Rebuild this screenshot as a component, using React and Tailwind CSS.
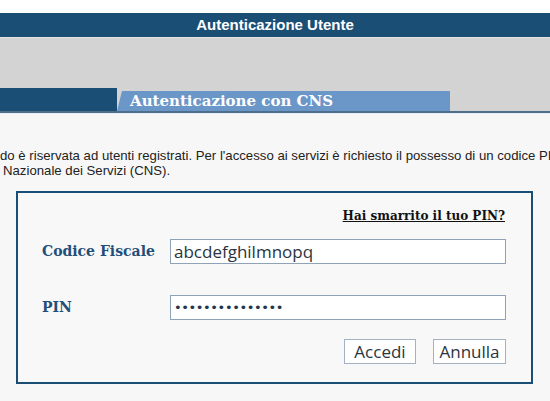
const serif = "font-['DejaVu_Serif',serif]";

export default function App() {
  return (
    <div className="w-[550px] h-[401px] overflow-hidden bg-[#f7f7f7] font-['Liberation_Sans',Arial,sans-serif]">
      <div className="h-[13px] bg-white" />
      <div className="h-[24px] bg-[#1a4e75] flex items-center justify-center text-white font-bold text-[15px]">
        Autenticazione Utente
      </div>
      <div className="h-[74px] bg-[#d3d3d3] border-t border-[#e4e4e4] flex items-end">
        <div className="w-[117px] h-[23px] bg-[#1a4e75]" />
        <div className="w-[333px] h-[20px] bg-[#6b96c8] [clip-path:polygon(5px_0,100%_0,100%_100%,0_100%)] flex items-center pl-[13px]">
          <span className={`${serif} text-white font-bold text-[15px]`}>Autenticazione con CNS</span>
        </div>
      </div>
      <div className="h-[2px] bg-[#4d6f8c]" />
      <div className="h-[1px] bg-[#e8eef4]" />

      <div className="mt-[34px] text-[13.2px] leading-[15px] text-[#222] whitespace-nowrap overflow-hidden">
        <div>do è riservata ad utenti registrati. Per l'accesso ai servizi è richiesto il possesso di un codice PIN e della</div>
        <div className="pl-[3px]">Nazionale dei Servizi (CNS).</div>
      </div>

      <div className="ml-[16px] mt-[13px] w-[517px] h-[193px] border-2 border-[#1a4e75] bg-[#f8f8f8] px-[24px] pt-[14px]">
        <div className="flex justify-end pr-[2px]">
          <a className={`${serif} text-[12px] font-bold text-[#111] underline`}>Hai smarrito il tuo PIN?</a>
        </div>
        <div className="flex items-center mt-[14px]">
          <label className={`${serif} w-[128px] text-[14px] font-bold text-[#1f4f7a]`}>Codice Fiscale</label>
          <div className="w-[336px] h-[25px] border border-[#8fa3b8] bg-white flex items-center px-[3px] text-[17px] text-[#2a3440] font-['Open_Sans',sans-serif]">
            abcdefghilmnopq
          </div>
        </div>
        <div className="flex items-center mt-[31px]">
          <label className={`${serif} w-[128px] text-[14px] font-bold text-[#1f4f7a]`}>PIN</label>
          <div className="w-[336px] h-[25px] border border-[#8fa3b8] bg-white flex items-center px-[3px] text-[#22374d]">
            <span className="text-[13px] tracking-[-0.4px] font-['DejaVu_Sans',sans-serif]">•••••••••••••••</span>
          </div>
        </div>
        <div className="flex justify-end gap-[17px] mt-[19px] pr-[1px]">
          <button className="w-[72px] h-[25px] border border-[#a3b2c2] bg-white text-[17px] text-[#2a3440] font-['Open_Sans',sans-serif] leading-none">
            Accedi
          </button>
          <button className="w-[73px] h-[25px] border border-[#a3b2c2] bg-white text-[17px] text-[#2a3440] font-['Open_Sans',sans-serif] leading-none">
            Annulla
          </button>
        </div>
      </div>
    </div>
  );
}
